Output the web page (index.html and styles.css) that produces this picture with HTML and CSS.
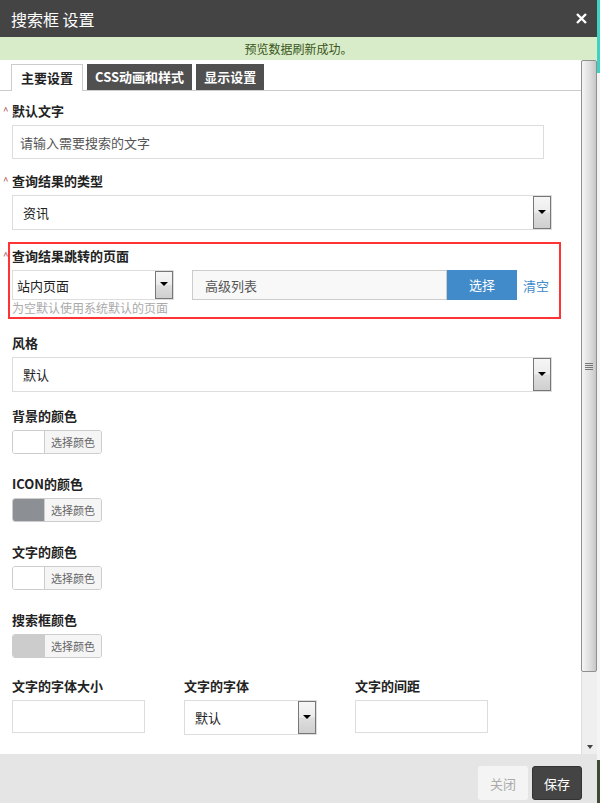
FILE: index.html
```html
<html>
<head>
<meta charset="utf-8">
<title>搜索框 设置</title>
<link rel="stylesheet" href="styles.css">
</head>
<body>

<div class="dialog">
<div class="head">
<span class="title">搜索框 设置</span>
<svg class="close" width="11" height="11" viewBox="0 0 11 11"><path d="M1 1L10 10M10 1L1 10" stroke="#fff" stroke-width="2.4"/></svg>
</div>
<div class="notice">预览数据刷新成功。</div>

<div class="main">
<div class="pane">
<ul class="tabs">
<li class="tab active">主要设置</li>
<li class="tab">CSS动画和样式</li>
<li class="tab">显示设置</li>
</ul>

<div class="form">
<div class="group">
<label class="lbl"><i class="req">^</i>默认文字</label>
<input class="text wide" placeholder="请输入需要搜索的文字">
</div>

<div class="group">
<label class="lbl"><i class="req">^</i>查询结果的类型</label>
<div class="select full"><span class="val">资讯</span><span class="arrow"><b></b></span></div>
</div>

<div class="group picked">
<label class="lbl"><i class="req">^</i>查询结果跳转的页面</label>
<div class="row">
<div class="select small"><span class="val">站内页面</span><span class="arrow"><b></b></span></div>
<input class="text page" value="高级列表" readonly>
<a class="btn-pick" href="#">选择</a>
<a class="clear" href="#">清空</a>
</div>
<div class="hint">为空默认使用系统默认的页面</div>
</div>

<div class="group style">
<label class="lbl">风格</label>
<div class="select full"><span class="val">默认</span><span class="arrow"><b></b></span></div>
</div>

<div class="group color">
<label class="lbl">背景的颜色</label>
<div class="picker"><span class="swatch"></span><span class="pickbtn">选择颜色</span></div>
</div>

<div class="group color">
<label class="lbl">ICON的颜色</label>
<div class="picker"><span class="swatch gray"></span><span class="pickbtn">选择颜色</span></div>
</div>

<div class="group color">
<label class="lbl">文字的颜色</label>
<div class="picker"><span class="swatch"></span><span class="pickbtn">选择颜色</span></div>
</div>

<div class="group color last">
<label class="lbl">搜索框颜色</label>
<div class="picker"><span class="swatch light"></span><span class="pickbtn">选择颜色</span></div>
</div>

<div class="cols">
<div>
<label class="lbl">文字的字体大小</label>
<input class="text narrow">
</div>
<div>
<label class="lbl">文字的字体</label>
<div class="select narrow"><span class="val">默认</span><span class="arrow"><b></b></span></div>
</div>
<div>
<label class="lbl">文字的间距</label>
<input class="text narrow">
</div>
</div>
</div>
</div>

<div class="scroll">
<div class="thumb"><span class="grip"></span></div>
<div class="track"><b class="down"></b></div>
</div>
</div>

<div class="foot">
<button class="btn close-btn">关闭</button>
<button class="btn save">保存</button>
</div>
</div>

</body>
</html>
```

FILE: styles.css
```css
body {
	margin: 0;
	height: 803px;
	font-family: "Noto Sans CJK SC", "Noto Sans", sans-serif;
	background: linear-gradient(#3cd3c3 0, #3cd3c3 73px, #f4f4f4 73px, #f4f4f4 760px, #3e4a32 760px);
}
.dialog {
	width: 597px;
	height: 803px;
	display: flex;
	flex-direction: column;
	background: #fff;
}
.head {
	height: 37px;
	flex: none;
	background: #444;
	color: #fff;
	display: flex;
	align-items: center;
	justify-content: space-between;
	padding: 0 10px 0 11px;
	box-sizing: border-box;
}
.title {
	font-size: 16px;
}
.notice {
	height: 23px;
	flex: none;
	line-height: 23px;
	background: #d9ecc9;
	color: #3a5620;
	text-align: center;
	font-size: 12px;
}
.main {
	flex: 1;
	display: flex;
	min-height: 0;
}
.pane {
	flex: 1;
	overflow: hidden;
	padding-top: 4px;
}
.tabs {
	list-style: none;
	margin: 0;
	padding: 0 0 0 11px;
	display: flex;
	align-items: flex-start;
	height: 26px;
	border-bottom: 1px solid #ccc;
}
.tab {
	height: 26px;
	line-height: 26px;
	padding: 0 8px;
	margin-right: 4px;
	background: #505050;
	color: #fff;
	font-size: 13px;
	font-weight: bold;
}
.tab.active {
	height: 27px;
	box-sizing: border-box;
	line-height: 25px;
	background: #fff;
	color: #222;
	border: 1px solid #ccc;
	border-bottom: none;
	padding: 0 9px;
}
.form {
	padding: 10px 0 0 12px;
}
.group {
	margin-bottom: 12px;
}
.group.picked {
	margin-bottom: 14px;
}
.group.style {
	margin-bottom: 14px;
}
.group.color {
	margin-bottom: 20px;
}
.group.color.last {
	margin-bottom: 18px;
}
.lbl {
	display: block;
	font-size: 13px;
	font-weight: bold;
	line-height: 20px;
	margin-bottom: 4px;
	color: #222;
}
.req {
	font-style: normal;
	font-weight: normal;
	display: inline-block;
	width: 9px;
	margin-left: -9px;
	color: #a44;
	font-size: 10px;
	vertical-align: top;
	line-height: 20px;
}
.text {
	display: block;
	height: 34px;
	box-sizing: border-box;
	border: 1px solid #ddd;
	padding: 0 7px;
	font-family: inherit;
	font-size: 13px;
	color: #333;
	outline: none;
}
.text::placeholder {
	color: #555;
}
.text.wide {
	width: 532px;
}
.text.narrow {
	width: 133px;
	height: 33px;
}
.select {
	display: flex;
	align-items: stretch;
	height: 35px;
	box-sizing: border-box;
	border: 1px solid #ddd;
	font-size: 13px;
	color: #222;
	padding-left: 10px;
}
.select.full {
	width: 540px;
}
.select.narrow {
	width: 133px;
}
.select.small {
	width: 162px;
	height: 30px;
	padding-left: 4px;
}
.val {
	flex: 1;
	display: flex;
	align-items: center;
}
.arrow {
	width: 18px;
	box-sizing: border-box;
	border: 1px solid #777;
	background: linear-gradient(#f6f6f6 0, #ececec 48%, #dedede 52%, #cfcfcf 100%);
	display: flex;
	align-items: center;
	justify-content: center;
}
.arrow b {
	width: 0;
	height: 0;
	border-left: 4px solid transparent;
	border-right: 4px solid transparent;
	border-top: 4px solid #000;
	margin-top: -2px;
}
.picked {
	margin-left: -4px;
	width: 553px;
	box-sizing: border-box;
	border: 2px solid #f33;
	padding: 2px 2px 1px 2px;
}
.row {
	display: flex;
	align-items: center;
	height: 30px;
}
.text.page {
	width: 255px;
	height: 30px;
	margin-left: 18px;
	background: #f8f8f8;
	border-color: #ccc;
	padding: 0 12px;
	color: #555;
}
.btn-pick {
	width: 70px;
	height: 30px;
	line-height: 30px;
	text-align: center;
	background: #428bca;
	color: #fff;
	font-size: 13px;
	text-decoration: none;
}
.clear {
	margin-left: 6px;
	color: #428bca;
	font-size: 13px;
	text-decoration: none;
}
.hint {
	font-size: 12px;
	line-height: 16px;
	color: #aaa;
}
.picker {
	display: inline-flex;
	height: 24px;
	box-sizing: border-box;
	border: 1px solid #ccc;
	border-radius: 3px;
	overflow: hidden;
}
.swatch {
	width: 31px;
	background: #fff;
	border-right: 1px solid #ccc;
}
.swatch.gray {
	background: #8c8f93;
}
.swatch.light {
	background: #ccc;
}
.pickbtn {
	width: 56px;
	background: #f5f5f5;
	color: #666;
	font-size: 11px;
	line-height: 22px;
	text-align: center;
}
.cols {
	display: grid;
	grid-template-columns: 172px 171px 172px;
}
.scroll {
	width: 16px;
	flex: none;
	display: flex;
	flex-direction: column;
	background: #efefef;
}
.thumb {
	height: 612px;
	box-sizing: border-box;
	border: 1px solid #8f8f8f;
	border-radius: 2px;
	background: linear-gradient(to right, #f5f5f5, #dcdcdc 60%, #c6c6c6);
	display: flex;
	align-items: center;
	justify-content: center;
}
.grip {
	width: 8px;
	height: 7px;
	background: repeating-linear-gradient(#777 0, #777 1px, transparent 1px, transparent 2px);
}
.track {
	flex: 1;
	display: flex;
	align-items: flex-end;
	justify-content: center;
	padding-bottom: 5px;
	border-left: 1px solid #ddd;
}
.down {
	width: 0;
	height: 0;
	border-left: 3px solid transparent;
	border-right: 3px solid transparent;
	border-top: 4px solid #444;
}
.foot {
	height: 49px;
	flex: none;
	background: #e5e5e5;
	display: flex;
	justify-content: flex-end;
	align-items: flex-start;
	padding: 12px 15px 0 0;
	box-sizing: border-box;
}
.btn {
	width: 50px;
	height: 34px;
	border-radius: 3px;
	font-family: inherit;
	font-size: 13px;
}
.close-btn {
	background: #f4f4f4;
	color: #aaa;
	border: none;
}
.save {
	margin-left: 4px;
	background: #444;
	color: #fff;
	border: 1px solid #333;
}
```
